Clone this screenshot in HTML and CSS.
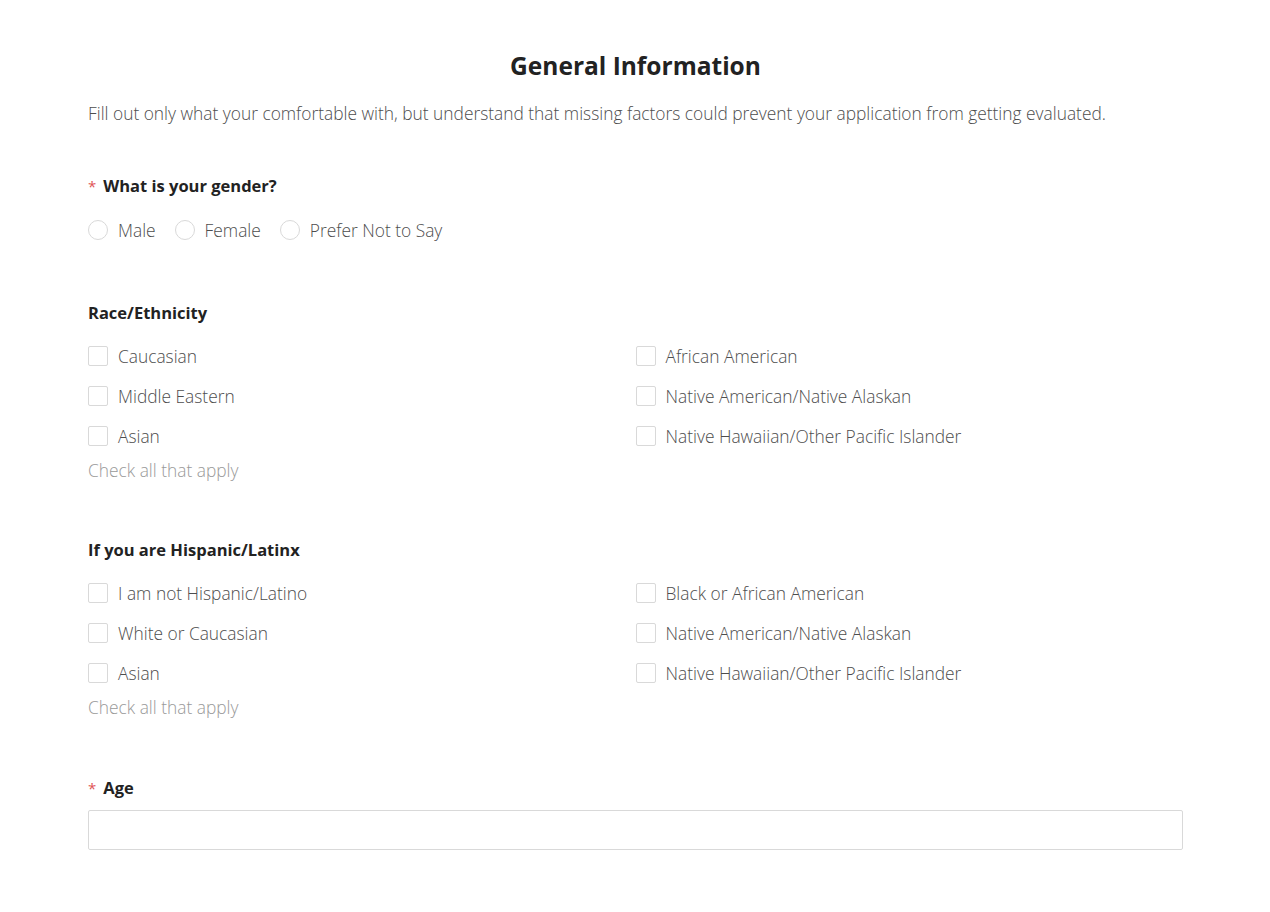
FILE: index.html
```html
<!DOCTYPE html>
<html>
<head>
<meta charset="utf-8">
<link rel="stylesheet" href="styles.css">
</head>
<body>
<div class="page">
  <h1 class="title">General Information</h1>
  <p class="desc">Fill out only what your comfortable with, but understand that missing factors could prevent your application from getting evaluated.</p>

  <section class="field field-gender">
    <div class="label"><span class="req">*</span>What is your gender?</div>
    <div class="radios">
      <label class="opt"><span class="radio"></span>Male</label>
      <label class="opt"><span class="radio"></span>Female</label>
      <label class="opt"><span class="radio"></span>Prefer Not to Say</label>
    </div>
  </section>

  <section class="field field-check field-race">
    <div class="label">Race/Ethnicity</div>
    <div class="grid">
      <label class="opt"><span class="box"></span>Caucasian</label>
      <label class="opt"><span class="box"></span>African American</label>
      <label class="opt"><span class="box"></span>Middle Eastern</label>
      <label class="opt"><span class="box"></span>Native American/Native Alaskan</label>
      <label class="opt"><span class="box"></span>Asian</label>
      <label class="opt"><span class="box"></span>Native Hawaiian/Other Pacific Islander</label>
    </div>
    <div class="help">Check all that apply</div>
  </section>

  <section class="field field-check field-hisp">
    <div class="label">If you are Hispanic/Latinx</div>
    <div class="grid">
      <label class="opt"><span class="box"></span>I am not Hispanic/Latino</label>
      <label class="opt"><span class="box"></span>Black or African American</label>
      <label class="opt"><span class="box"></span>White or Caucasian</label>
      <label class="opt"><span class="box"></span>Native American/Native Alaskan</label>
      <label class="opt"><span class="box"></span>Asian</label>
      <label class="opt"><span class="box"></span>Native Hawaiian/Other Pacific Islander</label>
    </div>
    <div class="help">Check all that apply</div>
  </section>

  <section class="field field-age">
    <div class="label"><span class="req">*</span>Age</div>
    <div class="input"></div>
  </section>
</div>
</body>
</html>
```
FILE: styles.css
```css
html, body {
  margin: 0;
  padding: 0;
  background: #fff;
}
body {
  font-family: "Open Sans", "Noto Sans", sans-serif;
  color: #4d4d4d;
}
.page {
  width: 1095px;
  margin: 0 0 0 88px;
  padding: 50px 0 0 0;
  box-sizing: border-box;
}
.title {
  margin: 0;
  text-align: center;
  font-size: 24.5px;
  font-weight: 700;
  line-height: 32px;
  color: #222;
}
.desc {
  margin: 19px 0 0 0;
  font-size: 17.35px;
  font-weight: 300;
  line-height: 24px;
  color: #4d4d4d;
}
.field {
  margin-top: 49px;
}
.label {
  font-size: 16.5px;
  font-weight: 700;
  color: #222;
  line-height: 24px;
  display: flex;
  align-items: center;
}
.req {
  color: #e05555;
  font-weight: 400;
  margin-right: 7px;
  font-size: 15px;
}
.radios {
  display: flex;
  gap: 19px;
  margin-top: 20px;
}
.opt {
  display: flex;
  align-items: center;
  font-size: 17.35px;
  font-weight: 300;
  line-height: 24px;
  color: #4d4d4d;
}
.radio {
  width: 20px;
  height: 20px;
  border: 1px solid #d9d9d9;
  border-radius: 50%;
  margin-right: 10px;
  box-sizing: border-box;
}
.box {
  width: 20px;
  height: 20px;
  border: 1px solid #d9d9d9;
  border-radius: 2px;
  margin-right: 10px;
  box-sizing: border-box;
}
.field-check .grid {
  display: grid;
  grid-template-columns: 1fr 1fr;
  row-gap: 16px;
  margin-top: 19px;
}
.help {
  margin-top: 10px;
  font-size: 17.35px;
  font-weight: 300;
  line-height: 24px;
  color: #999;
}
.field-race {
  margin-top: 59px;
}
.field-hisp {
  margin-top: 56px;
}
.field-age {
  margin-top: 57px;
}
.input {
  margin-top: 10px;
  height: 40px;
  border: 1px solid #d9d9d9;
  border-radius: 2px;
  box-sizing: border-box;
}
```
